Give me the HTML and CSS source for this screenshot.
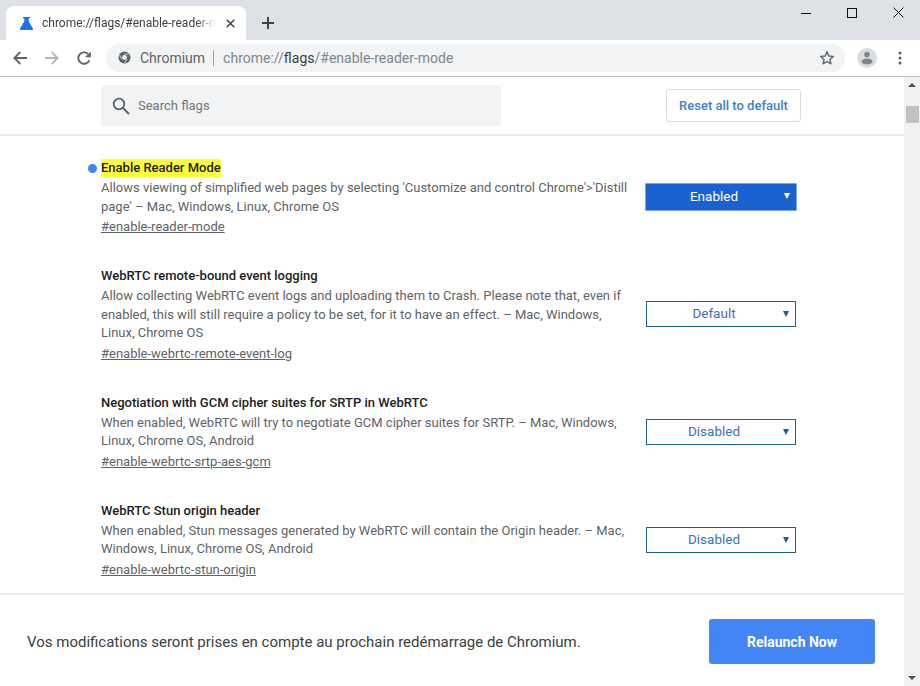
FILE: index.html
```html
<!DOCTYPE html>
<html lang="en">
<head>
<meta charset="utf-8">
<title>chrome://flags</title>
<link rel="stylesheet" href="styles.css">
</head>
<body>
<div class="window">
  <header class="tabstrip">
    <div class="tab">
      <svg class="tab-icon" width="13" height="13" viewBox="0 0 13 13"><path d="M3 0h7v1.300H8.700v3L12.800 11.300c.5.900 0 1.700-.9 1.700H1.100c-.9 0-1.400-.8-.9-1.700L4.300 4.300v-3H3z" fill="#1a73e8"/></svg>
      <span class="tab-title">chrome://flags/#enable-reader-mode</span>
      <svg class="tab-close" width="9" height="9" viewBox="0 0 9 9"><path d="M.7.700l7.600 7.600M8.300.700L.7 8.300" stroke="#3c4043" stroke-width="1.500" fill="none"/></svg>
    </div>
    <svg class="new-tab" width="12" height="12" viewBox="0 0 12 12"><path d="M6 0v12M0 6h12" stroke="#3c4043" stroke-width="2" fill="none"/></svg>
    <div class="window-controls">
      <svg width="10" height="10" viewBox="0 0 10 10"><path d="M0 5.500h10" stroke="#111" stroke-width="1" fill="none"/></svg>
      <svg width="10" height="10" viewBox="0 0 10 10"><rect x=".5" y=".5" width="9" height="9" stroke="#111" fill="none"/></svg>
      <svg width="11" height="11" viewBox="0 0 11 11"><path d="M.5.500l10 10M10.500.500l-10 10" stroke="#111" fill="none"/></svg>
    </div>
  </header>
  <nav class="toolbar">
    <svg class="nav-btn" width="14" height="14" viewBox="0 0 14 14"><path d="M14 7H1.500M7.300 1L1.300 7l6 6" stroke="#5f6368" stroke-width="1.800" fill="none"/></svg>
    <svg class="nav-btn" width="14" height="14" viewBox="0 0 14 14"><path d="M0 7h12.500M6.700 1l6 6-6 6" stroke="#b4b6b9" stroke-width="1.800" fill="none"/></svg>
    <svg class="nav-btn" width="14" height="14" viewBox="0 0 14 14"><path d="M12.300 9.300A5.700 5.700 0 1 1 11 3" stroke="#5f6368" stroke-width="1.900" fill="none"/><path d="M13.800.500v5.700H8.100z" fill="#5f6368"/></svg>
    <div class="omnibox">
      <svg class="site-icon" width="13" height="13" viewBox="0 0 14 14"><circle cx="7" cy="7" r="6.500" fill="#5f6368"/><circle cx="7" cy="7" r="2.600" fill="#f1f3f4"/><path d="M7 3.400h5.400M4 8.800L1.600 4.300M9.800 8.800L7 13" stroke="#f1f3f4" stroke-width=".8"/></svg>
      <span class="origin">Chromium</span>
      <span class="url"><span class="url-dim">chrome://</span><span class="url-host">flags</span><span class="url-dim">/#enable-reader-mode</span></span>
      <svg class="star" width="16" height="16" viewBox="0 0 16 16"><path d="M8 1.800l1.800 4.200 4.500.400-3.400 3 1 4.400L8 11.500l-3.900 2.300 1-4.400-3.400-3 4.500-.400z" stroke="#5f6368" stroke-width="1.400" fill="none" stroke-linejoin="round"/></svg>
    </div>
    <svg class="avatar" width="20" height="20" viewBox="0 0 20 20"><circle cx="10" cy="10" r="10" fill="#dadce0"/><circle cx="10" cy="6.500" r="2.800" fill="#80868b"/><ellipse cx="10" cy="13.500" rx="5.500" ry="3" fill="#80868b"/></svg>
    <svg class="menu" width="4" height="14" viewBox="0 0 4 14"><circle cx="2" cy="2" r="1.500" fill="#5f6368"/><circle cx="2" cy="7" r="1.500" fill="#5f6368"/><circle cx="2" cy="12" r="1.500" fill="#5f6368"/></svg>
  </nav>
  <div class="viewport">
    <div class="page">
      <div class="search-bar">
        <div class="search-box">
          <svg width="18" height="18" viewBox="0 0 18 18"><circle cx="7" cy="7" r="5.300" stroke="#5f6368" stroke-width="1.800" fill="none"/><path d="M11 11l6 6" stroke="#5f6368" stroke-width="2" fill="none"/></svg>
          <span>Search flags</span>
        </div>
        <button class="reset">Reset all to default</button>
      </div>
      <main class="flags">
        <section class="flag flag-on">
          <div class="flag-text">
            <h2 class="flag-name"><mark>Enable Reader Mode</mark></h2>
            <p class="flag-desc">Allows viewing of simplified web pages by selecting 'Customize and control Chrome'&gt;'Distill page' – Mac, Windows, Linux, Chrome OS</p>
            <a class="flag-link">#enable-reader-mode</a>
          </div>
          <div class="select select-on">Enabled<span class="caret"></span></div>
        </section>
        <section class="flag">
          <div class="flag-text">
            <h2 class="flag-name">WebRTC remote-bound event logging</h2>
            <p class="flag-desc">Allow collecting WebRTC event logs and uploading them to Crash. Please note that, even if enabled, this will still require a policy to be set, for it to have an effect. – Mac, Windows, Linux, Chrome OS</p>
            <a class="flag-link">#enable-webrtc-remote-event-log</a>
          </div>
          <div class="select">Default<span class="caret"></span></div>
        </section>
        <section class="flag">
          <div class="flag-text">
            <h2 class="flag-name">Negotiation with GCM cipher suites for SRTP in WebRTC</h2>
            <p class="flag-desc">When enabled, WebRTC will try to negotiate GCM cipher suites for SRTP. – Mac, Windows, Linux, Chrome OS, Android</p>
            <a class="flag-link">#enable-webrtc-srtp-aes-gcm</a>
          </div>
          <div class="select">Disabled<span class="caret"></span></div>
        </section>
        <section class="flag">
          <div class="flag-text">
            <h2 class="flag-name">WebRTC Stun origin header</h2>
            <p class="flag-desc">When enabled, Stun messages generated by WebRTC will contain the Origin header. – Mac, Windows, Linux, Chrome OS, Android</p>
            <a class="flag-link">#enable-webrtc-stun-origin</a>
          </div>
          <div class="select">Disabled<span class="caret"></span></div>
        </section>
      </main>
      <footer class="relaunch">
        <span>Vos modifications seront prises en compte au prochain redémarrage de Chromium.</span>
        <button class="relaunch-btn">Relaunch Now</button>
      </footer>
    </div>
    <div class="scrollbar">
      <span class="arrow-up"></span>
      <span class="thumb"></span>
      <span class="arrow-down"></span>
    </div>
  </div>
</div>
</body>
</html>
```
FILE: styles.css
```css
* { box-sizing: border-box; }
html, body { margin: 0; height: 100%; overflow: hidden; }
body { font-family: Roboto, sans-serif; font-size: 13px; color: #5f6368; background: #fff; }
.window { width: 920px; height: 686px; display: flex; flex-direction: column; }

.tabstrip { height: 40px; flex: none; background: #dee1e6; display: flex; align-items: flex-end; padding-left: 6px; }
.tab { width: 240px; height: 34px; background: #fff; border-radius: 8px 8px 0 0; display: flex; align-items: center; padding: 0 0 0 14px; color: #3c4043; font-size: 12px; }
.tab-icon { flex: none; }
.tab-title { margin-left: 9px; width: 174px; overflow: hidden; white-space: nowrap; flex: none; -webkit-mask-image: linear-gradient(90deg, #000 88%, transparent 100%); mask-image: linear-gradient(90deg, #000 88%, transparent 100%); }
.tab-close { margin-left: 10px; flex: none; }
.new-tab { margin: 0 0 11px 16px; flex: none; }
.window-controls { margin-left: auto; align-self: flex-start; display: flex; align-items: center; gap: 36px; padding: 7px 16px 0 0; }

.toolbar { height: 37px; flex: none; background: #fff; border-bottom: 1px solid #b9babb; display: flex; align-items: center; padding: 0 0 1px 13px; }
.nav-btn { flex: none; margin-right: 18px; }
.omnibox { flex: none; width: 739px; height: 28px; margin-left: -3px; background: #f1f3f4; border-radius: 14px; display: flex; align-items: center; padding: 0 10px 0 12px; font-size: 14px; }
.site-icon { flex: none; }
.origin { margin-left: 9px; padding-right: 8px; border-right: 1px solid #9aa0a6; line-height: 16px; color: #5f6368; }
.url { margin-left: 9px; color: #202124; }
.url-dim { color: #80868b; }
.url-host { color: #3c4043; }
.star { margin-left: auto; }
.avatar { flex: none; margin-left: 12px; }
.menu { flex: none; margin-left: 21px; }

.viewport { flex: 1; display: flex; min-height: 0; }
.page { flex: 1; display: flex; flex-direction: column; min-width: 0; }
.search-bar { height: 59px; flex: none; border-bottom: 2px solid #ececec; padding: 8px 103px 0 101px; display: flex; justify-content: space-between; align-items: flex-start; }
.search-box { width: 400px; height: 41px; background: #f1f3f4; border-radius: 2px; display: flex; align-items: center; padding-left: 11px; gap: 8px; color: #757575; font-size: 13px; }
.search-box svg { flex: none; }
.reset { width: 135px; height: 33px; margin-top: 4px; background: #fff; border: 1px solid #dadce0; border-radius: 3px; color: #3d7fd0; font: 500 13px Roboto, sans-serif; }

.flags { flex: 1; min-height: 0; overflow: hidden; padding: 23px 108px 0 101px; }
.flag { display: flex; justify-content: space-between; align-items: center; }
.flag + .flag { margin-top: 31px; }
.flag-text { width: 527px; }
.flag-name { margin: 0; font-size: 13px; font-weight: 500; line-height: 18px; color: #202124; position: relative; }
.flag-on .flag-name::before { content: ""; position: absolute; left: -13px; top: 5px; width: 9px; height: 9px; border-radius: 50%; background: #4285f4; }
mark { background: #ffff38; color: #202124; display: inline-block; }
.flag-desc { margin: 2px 0; line-height: 18.500px; }
.flag-link { display: block; line-height: 18px; text-decoration: underline; color: #5f6368; }
.select { position: relative; width: 150px; height: 26px; margin-bottom: 1px; border: 1px solid #1f5f8f; color: #3f6fb5; font-size: 13.500px; line-height: 23px; text-align: center; padding-right: 14px; }
.select-on { width: 152px; height: 28px; margin-right: -1px; background: #1a62d2; border-color: #7aa7e6; border-radius: 1px; color: #fff; padding-right: 14px; line-height: 25px; }
.caret { position: absolute; right: 6px; top: 9px; width: 0; height: 0; border-left: 3px solid transparent; border-right: 3px solid transparent; border-top: 6px solid #1f5f8f; }
.select-on .caret { border-top-color: #fff; }

.relaunch { height: 93px; flex: none; border-top: 2px solid #ececec; display: flex; align-items: center; justify-content: space-between; padding: 2px 29px 0 27px; font-size: 15px; color: #3c4043; }
.relaunch-btn { width: 166px; height: 45px; background: #4285f4; border: 0; border-radius: 3px; color: #fff; font: 700 14px Roboto, sans-serif; }

.scrollbar { width: 16px; flex: none; background: #f1f1f1; position: relative; }
.thumb { position: absolute; left: 2px; top: 29px; width: 13px; height: 17px; background: #c1c1c1; }
.arrow-up, .arrow-down { position: absolute; left: 4px; width: 0; height: 0; border-left: 4px solid transparent; border-right: 4px solid transparent; }
.arrow-up { top: 6px; border-bottom: 4px solid #505050; }
.arrow-down { bottom: 6px; border-top: 4px solid #505050; }
```
